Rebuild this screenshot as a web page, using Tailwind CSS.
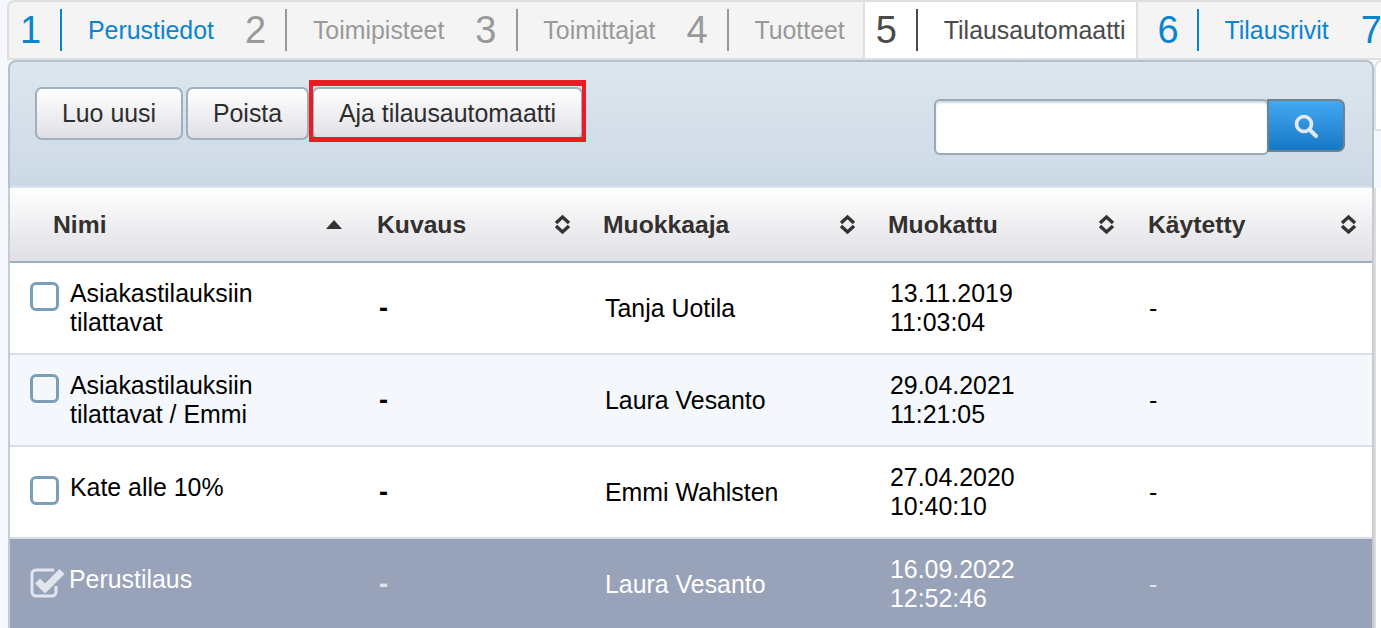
<!DOCTYPE html>
<html lang="fi">
<head>
<meta charset="utf-8">
<script src="https://cdn.jsdelivr.net/npm/@tailwindcss/browser@4"></script>
<title>Tilausautomaatti</title>
</head>
<body class="h-[628px] w-[1381px] overflow-hidden bg-[#f5f9fd] font-['Liberation_Sans',Arial,sans-serif] text-[24.9px] leading-[29px] text-black">
<div class="relative h-[628px] w-[1381px] overflow-hidden">
  <!-- next panel peeking on the right -->
  <div class="absolute left-[1374px] top-[60px] h-[71px] w-[20px] rounded-tl-[8px] border-2 border-[#dfe2e5] bg-white"></div>
  <div class="absolute left-[1374px] top-[188px] h-[440px] w-[7px] border-l-2 border-[#dcdcdc] bg-white"></div>

  <!-- tabs -->
  <nav class="ml-[7px] flex h-[60px] flex-nowrap overflow-hidden rounded-tl-[8px] border-b-2 border-l-2 border-t-2 border-[#dfdfdf] bg-[#f4f4f4]">
    <div class="flex h-full shrink-0 items-center pl-[11px] pr-[19px] text-[#0b84cf]">
      <span class="w-5 text-[38px]">1</span><span class="ml-5 h-[42px] w-0.5 bg-[#0b84cf]"></span><span class="ml-[26px]">Perustiedot</span>
    </div>
    <div class="flex h-full shrink-0 items-center pl-3 pr-[19px] text-[#999999]">
      <span class="w-5 text-[38px]">2</span><span class="ml-5 h-[42px] w-0.5 bg-[#999999]"></span><span class="ml-[26px]">Toimipisteet</span>
    </div>
    <div class="flex h-full shrink-0 items-center pl-3 pr-[19px] text-[#999999]">
      <span class="w-5 text-[38px]">3</span><span class="ml-[21px] h-[42px] w-0.5 bg-[#999999]"></span><span class="ml-[25px]">Toimittajat</span>
    </div>
    <div class="flex h-full shrink-0 items-center pl-3 pr-[18px] text-[#999999]">
      <span class="w-5 text-[38px]">4</span><span class="ml-[21px] h-[42px] w-0.5 bg-[#999999]"></span><span class="ml-[25px]">Tuotteet</span>
    </div>
    <div class="-mb-0.5 flex h-[58px] shrink-0 items-center border-x-2 border-[#dfdfdf] bg-white pb-0.5 pl-[11px] pr-[10px] text-[#4a4a4a]">
      <span class="w-5 text-[38px]">5</span><span class="ml-5 h-[42px] w-0.5 bg-[#4a4a4a]"></span><span class="ml-[26px]">Tilausautomaatti</span>
    </div>
    <div class="flex h-full shrink-0 items-center pl-5 pr-5 text-[#0b84cf]">
      <span class="w-5 text-[38px]">6</span><span class="ml-[19px] h-[42px] w-0.5 bg-[#0b84cf]"></span><span class="ml-[26px]">Tilausrivit</span>
    </div>
    <div class="flex h-full shrink-0 items-center pl-3 text-[#0b84cf]">
      <span class="w-5 text-[38px]">7</span>
    </div>
  </nav>

  <!-- toolbar -->
  <section class="relative ml-2 flex h-[128px] w-[1366px] justify-between rounded-t-[8px] border-x-2 border-t-2 border-[#b3c1cd] bg-linear-to-b from-[#dde6ef] to-[#ccd9e4] pl-[25px] pr-[27px] pt-[25px]">
    <div class="flex h-[53px] gap-[3px]">
      <button class="h-[53px] w-[148px] rounded-[7px] border-2 border-[#9db0be] bg-linear-to-b from-white to-[#e0dfe6] text-[#2d2d2d]">Luo uusi</button>
      <button class="h-[53px] w-[123px] rounded-[7px] border-2 border-[#9db0be] bg-linear-to-b from-white to-[#e0dfe6] text-[#2d2d2d]">Poista</button>
      <button class="h-[53px] w-[271px] rounded-[7px] border-2 border-[#9db0be] bg-linear-to-b from-white to-[#e0dfe6] text-[#2d2d2d]">Aja tilausautomaatti</button>
    </div>
    <div class="mt-3 flex h-[56px] items-start">
      <input class="h-[56px] w-[335px] rounded-[6px] border-2 border-[#98a9b7] bg-white shadow-[inset_0_2px_2px_#d5d9dd]" type="text" aria-label="Haku">
      <button class="-ml-0.5 flex h-[53px] w-[78px] items-center justify-center rounded-r-[7px] border-2 border-[#74808a] bg-linear-to-b from-[#43a9f3] to-[#1478c6]" aria-label="Hae">
        <svg width="24" height="24" viewBox="0 0 24 24" fill="none" stroke="#e3e8ee"><circle cx="10" cy="10" r="7.5" stroke-width="3.6"/><path d="M15.5 15.5 22 22" stroke-width="4" stroke-linecap="round"/></svg>
      </button>
    </div>
    <div class="absolute bottom-0 left-0 right-0 h-0.5 bg-[#d9e3eb]"></div>
  </section>

  <!-- table -->
  <section class="ml-2 w-[1366px] border-x-2 border-[#c4ccd4] bg-white">
    <div class="grid h-[75px] grid-cols-[355px_226px_285px_260px_1fr] items-center border-b-[2px] border-[#9ab0bf] bg-linear-to-b from-white to-[#dfdfe5] text-[24.7px] font-bold text-[#33302e]">
      <div class="flex items-center justify-between pl-[43px] pr-[23px]"><span>Nimi</span>
        <svg width="16" height="9" viewBox="0 0 16 9"><path d="M8 0 16 9H0Z" fill="#333"/></svg></div>
      <div class="flex items-center justify-between pl-3 pr-5"><span>Kuvaus</span>
        <svg width="17" height="21" viewBox="0 0 17 21" fill="none" stroke="#333" stroke-width="3.4"><path d="M2 9 8.5 3 15 9M2 12l6.500 6L15 12"/></svg></div>
      <div class="flex items-center justify-between pl-3 pr-5"><span>Muokkaaja</span>
        <svg width="17" height="21" viewBox="0 0 17 21" fill="none" stroke="#333" stroke-width="3.4"><path d="M2 9 8.5 3 15 9M2 12l6.500 6L15 12"/></svg></div>
      <div class="flex items-center justify-between pl-3 pr-[21px]"><span>Muokattu</span>
        <svg width="17" height="21" viewBox="0 0 17 21" fill="none" stroke="#333" stroke-width="3.4"><path d="M2 9 8.5 3 15 9M2 12l6.500 6L15 12"/></svg></div>
      <div class="flex items-center justify-between pl-3 pr-[15px]"><span>Käytetty</span>
        <svg width="17" height="21" viewBox="0 0 17 21" fill="none" stroke="#333" stroke-width="3.4"><path d="M2 9 8.5 3 15 9M2 12l6.500 6L15 12"/></svg></div>
    </div>

    <div class="grid h-[92px] grid-cols-[355px_226px_285px_260px_1fr] items-center border-b-2 border-[#d7e0e8] bg-white">
      <div class="flex min-h-[38px] items-start pl-5"><span class="mt-[3px] h-[29px] w-[29px] shrink-0 rounded-[6px] border-[3px] border-[#7c9fb9]"></span><span class="ml-[11px] w-[230px]">Asiakastilauksiin tilattavat</span></div>
      <div class="pl-[14px] text-[27px] font-bold">-</div>
      <div class="pl-[14px]">Tanja Uotila</div>
      <div class="pl-[14px]">13.11.2019<br>11:03:04</div>
      <div class="pl-[13px]">-</div>
    </div>

    <div class="grid h-[92px] grid-cols-[355px_226px_285px_260px_1fr] items-center border-b-2 border-[#d7e0e8] bg-[#f4f8fc]">
      <div class="flex min-h-[38px] items-start pl-5"><span class="mt-[3px] h-[29px] w-[29px] shrink-0 rounded-[6px] border-[3px] border-[#7c9fb9]"></span><span class="ml-[11px] w-[230px]">Asiakastilauksiin tilattavat / Emmi</span></div>
      <div class="pl-[14px] text-[27px] font-bold">-</div>
      <div class="pl-[14px]">Laura Vesanto</div>
      <div class="pl-[14px]">29.04.2021<br>11:21:05</div>
      <div class="pl-[13px]">-</div>
    </div>

    <div class="grid h-[92px] grid-cols-[355px_226px_285px_260px_1fr] items-center border-b-2 border-[#d7e0e8] bg-white">
      <div class="flex min-h-[38px] items-start pl-5"><span class="mt-[3px] h-[29px] w-[29px] shrink-0 rounded-[6px] border-[3px] border-[#7c9fb9]"></span><span class="ml-[11px] w-[230px]">Kate alle 10%</span></div>
      <div class="pl-[14px] text-[27px] font-bold">-</div>
      <div class="pl-[14px]">Emmi Wahlsten</div>
      <div class="pl-[14px]">27.04.2020<br>10:40:10</div>
      <div class="pl-[13px]">-</div>
    </div>

    <div class="grid h-[90px] grid-cols-[355px_226px_285px_260px_1fr] items-center bg-[#98a2b9] text-white">
      <div class="flex min-h-[38px] items-start pl-5">
        <svg class="mt-[3px] shrink-0" width="36" height="30" viewBox="0 0 36 30" fill="none"><path d="M26 18v6a4 4 0 0 1-4 4H6a4 4 0 0 1-4-4V6a4 4 0 0 1 4-4h18" stroke="#e2e5ed" stroke-width="3"/><path d="m7.500 13 7.500 7.500L32 3.500" stroke="#e2e5ed" stroke-width="7"/></svg>
        <span class="ml-[3px] w-[230px]">Perustilaus</span></div>
      <div class="pl-[14px] text-[27px] font-bold text-[#e2e5ed]">-</div>
      <div class="pl-[14px]">Laura Vesanto</div>
      <div class="pl-[14px]">16.09.2022<br>12:52:46</div>
      <div class="pl-[13px] text-[#e2e5ed]">-</div>
    </div>
  </section>

  <!-- red annotation frame -->
  <div class="absolute left-[309px] top-[80px] h-[62px] w-[277px] border-x-[4px] border-b-[5px] border-t-[6px] border-[#ed1c24]"></div>
</div>
</body>
</html>
